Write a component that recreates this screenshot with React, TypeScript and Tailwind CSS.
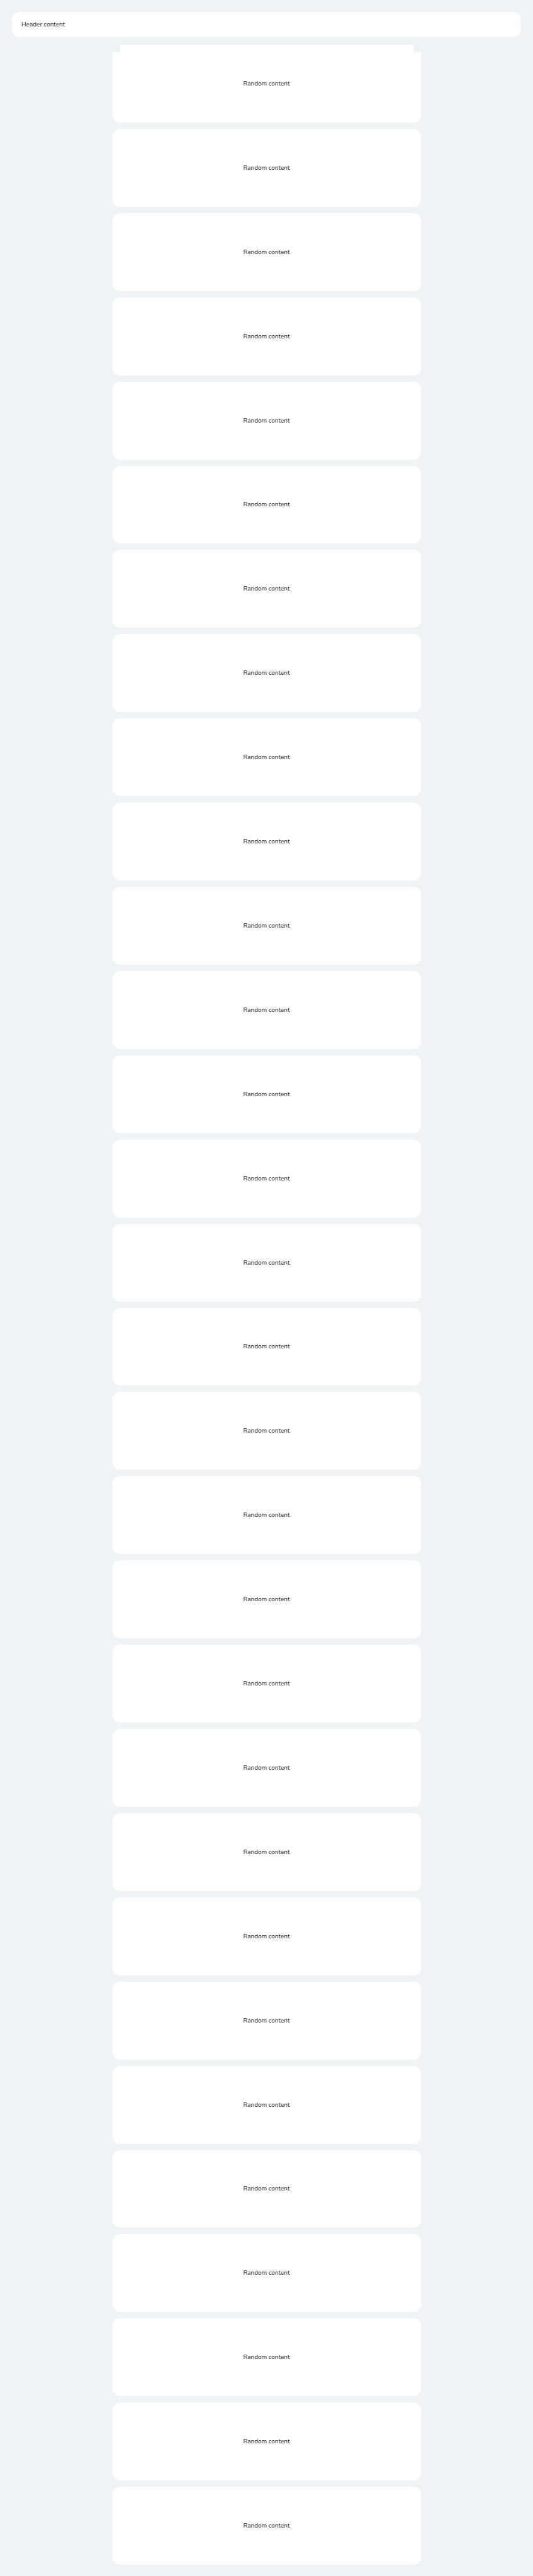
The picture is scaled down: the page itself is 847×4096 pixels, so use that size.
const cards = Array.from({ length: 30 }, (_, index) => ({
  id: index,
  text: "Random content",
}));

function Card({ text, notched }: { text: string; notched: boolean }) {
  return (
    <article
      className={
        notched
          ? "relative flex items-center justify-center rounded-b-[12px] bg-white p-4"
          : "flex items-center justify-center rounded-[12px] bg-white p-4"
      }
    >
      {notched && (
        <>
          <span className="absolute top-0 left-0 size-3 bg-[#eef4f6]" />
          <span className="absolute top-0 right-0 size-3 bg-[#eef4f6]" />
        </>
      )}
      <p>{text}</p>
    </article>
  );
}

export default function App() {
  return (
    <div className="flex min-h-screen flex-col gap-3 bg-[#eef4f6] px-[19px] pt-[19px] pb-[18px] font-['Nunito','Open_Sans',sans-serif] text-[10px] leading-4 text-[#1c2529]">
      <header className="flex h-10 items-center rounded-[12px] bg-white px-[15px]">
        Header content
      </header>
      <main className="mx-auto grid w-full max-w-[490px] flex-1 auto-rows-fr gap-[10px]">
        {cards.map((card) => (
          <Card key={card.id} text={card.text} notched={card.id === 0} />
        ))}
      </main>
    </div>
  );
}
